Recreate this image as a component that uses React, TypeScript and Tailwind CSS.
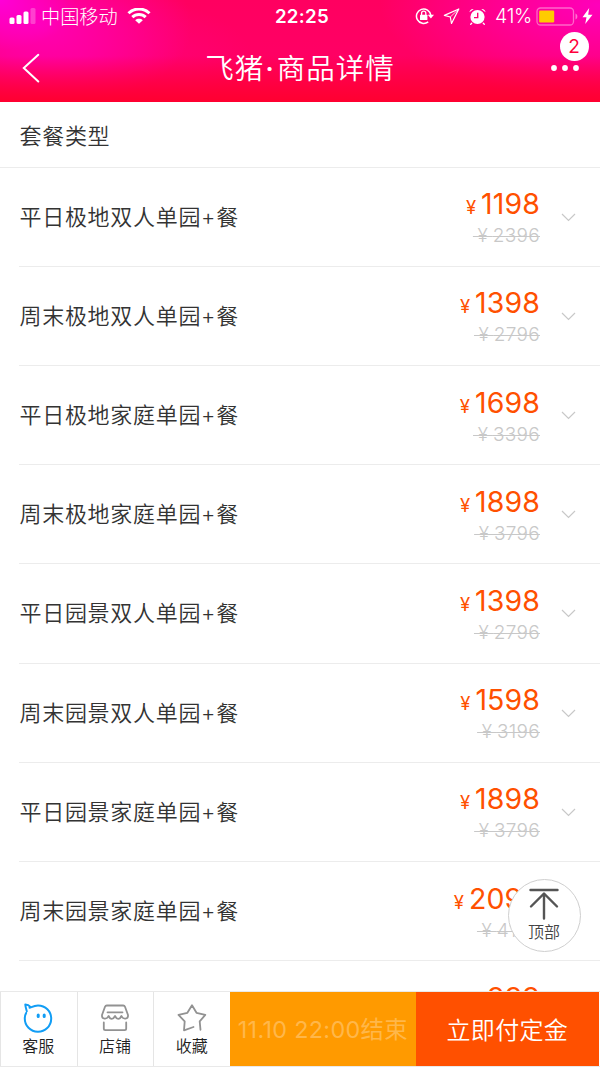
import type { ReactNode } from "react";

const packages = [
  { name: "平日极地双人单园+餐", price: "1198", oldPrice: "2396" },
  { name: "周末极地双人单园+餐", price: "1398", oldPrice: "2796" },
  { name: "平日极地家庭单园+餐", price: "1698", oldPrice: "3396" },
  { name: "周末极地家庭单园+餐", price: "1898", oldPrice: "3796" },
  { name: "平日园景双人单园+餐", price: "1398", oldPrice: "2796" },
  { name: "周末园景双人单园+餐", price: "1598", oldPrice: "3196" },
  { name: "平日园景家庭单园+餐", price: "1898", oldPrice: "3796" },
  { name: "周末园景家庭单园+餐", price: "2098", oldPrice: "4196" },
];

function StatusBar() {
  return (
    <div className="grid h-[34px] grid-cols-[1fr_auto_1fr] items-center">
      <div className="flex items-center pl-[9px]">
        <svg width="27" height="17" viewBox="0 0 27 17" fill="#fff">
          <rect x="0.5" y="9.5" width="5" height="6.5" rx="1.5" />
          <rect x="7.5" y="7" width="5" height="9" rx="1.5" />
          <rect x="14.5" y="3.5" width="5" height="12.5" rx="1.5" />
          <rect x="21.5" y="0" width="5" height="16" rx="1.5" opacity="0.25" />
        </svg>
        <span className="ml-[5px] pt-[2px] text-[19.2px] leading-none font-light whitespace-nowrap">中国移动</span>
        <svg className="ml-[9px]" width="24" height="17" viewBox="0 0 24 17" fill="none" stroke="#fff" strokeWidth="3">
          <path d="M1.5 5.3C7.3-.4 16.7-.4 22.5 5.3" />
          <path d="M5.3 9.2C9 5.6 15 5.6 18.7 9.2" />
          <path d="M12 15.7 8.2 12.2C10.4 10.3 13.6 10.3 15.8 12.2Z" fill="#fff" stroke="none" />
        </svg>
      </div>
      <span className="pt-px pl-[4px] text-[18.7px] font-semibold tracking-[0.3px]">22:25</span>
      <div className="flex items-center justify-end pr-[7px]">
        {/* Rotation lock */}
        <svg className="-mt-[2px]" width="19" height="18" viewBox="0 0 19 18" fill="none" stroke="#fff" strokeWidth="1.5">
          <path d="M13.2 14.8A7.2 7.2 0 1 1 15.8 8.2" />
          <path d="M12.8 7.7H19L15.9 11.5Z" fill="#fff" stroke="none" />
          <rect x="5" y="7.7" width="7.4" height="5.4" rx=".6" fill="#fff" stroke="none" />
          <path d="M6.6 8V6.2a2.1 2.1 0 0 1 4.2 0V8" strokeWidth="1.3" />
        </svg>
        <svg className="-mt-[2px] ml-[9px]" width="17" height="17" viewBox="0 0 17 17" fill="none" stroke="#fff" strokeWidth="1.2" strokeLinejoin="round">
          <path d="M15.8 1 1.4 7.4 7.3 9 8.5 15.5Z" />
          <path d="M7.3 9 15.8 1" strokeWidth="0.8" />
        </svg>
        {/* Alarm */}
        <svg className="-mt-[2px] ml-[9px]" width="17" height="17" viewBox="0 0 17 17" fill="#fff">
          <circle cx="8.5" cy="9" r="7.1" />
          <path d="M8.7 4.8v4.8H5" fill="none" stroke="#ff0070" strokeWidth="1.4" />
          <path d="M.5 4.3C.6 2.2 2.5.7 4.7 1.1ZM16.5 4.3C16.4 2.2 14.5.7 12.3 1.1Z" />
          <path d="m2.7 15.3-1 1M14.3 15.3l1 1" stroke="#fff" strokeWidth="1.3" strokeLinecap="round" />
        </svg>
        <span className="ml-[9px] text-[19.5px] leading-none font-[350] tracking-[-0.3px]">41%</span>
        <svg className="-mt-[2px] ml-[4px]" width="42" height="19" viewBox="0 0 42 19" fill="none">
          <rect x="1" y="1" width="36.5" height="17" rx="3.5" stroke="#fff" strokeOpacity=".4" strokeWidth="1.3" />
          <path d="M39.5 6.5C42 7.5 42 11.5 39.5 12.5Z" fill="#fff" fillOpacity=".45" />
          <rect x="3.2" y="3.5" width="15" height="12" rx="1.2" fill="#ffcb00" />
        </svg>
        <svg className="-mt-px ml-[4px]" width="11" height="17" viewBox="0 0 11 17" fill="#fff">
          <path d="M7.2 0 .5 9.2H4.5L3.2 16 10.5 6.8H6.2Z" />
        </svg>
      </div>
    </div>
  );
}

function Header() {
  return (
    <header className="h-[102px] shrink-0 bg-[linear-gradient(180deg,#ff003300_55%,#ff0030_100%),radial-gradient(ellipse_75px_50px_at_0px_0px,#ff00d8_0%,#ff00d800_100%),radial-gradient(ellipse_150px_85px_at_42px_26px,#ff00b4_0%,#ff00a000_100%),radial-gradient(ellipse_170px_65px_at_80px_55px,#ff009988_0%,#ff009900_100%),radial-gradient(ellipse_220px_95px_at_600px_5px,#ff00bb_0%,#ff009800_100%),linear-gradient(180deg,#ff0060_0%,#ff0064_50%,#ff0058_100%)] text-white">
      <StatusBar />
      <div className="relative flex h-[68px] items-center justify-between pr-[21px] pl-[22px]">
        <svg className="-mt-px" width="19" height="30" viewBox="0 0 19 30" fill="none" stroke="#fff" strokeWidth="2" strokeLinecap="round">
          <path d="M16.3 1.8 1.8 15 16.3 28.5" />
        </svg>
        <h1 className="absolute inset-x-0 top-[15px] text-center text-[28.5px] leading-[40px] font-[350] tracking-[1px]">
          飞猪<span className="mr-[2px] ml-[1px] font-medium">·</span>商品详情
        </h1>
        <svg width="28" height="6" viewBox="0 0 28 6" fill="#fff">
          <circle cx="3" cy="3" r="2.9" />
          <circle cx="14" cy="3" r="2.9" />
          <circle cx="25" cy="3" r="2.9" />
        </svg>
        <span className="absolute -top-[2px] right-[11.5px] flex size-[29px] items-center justify-center rounded-full bg-white pt-px text-[19px] text-[#ff003c]">
          2
        </span>
      </div>
    </header>
  );
}

function Price({ value }: { value: string }) {
  return (
    <div className="flex items-baseline text-[#ff5000]">
      <span className="mr-[5px] text-[18.5px] leading-none font-[370]">¥</span>
      <span className="-mr-[0.5px] text-[28.5px] leading-[36px] font-[370] tracking-[0.1px]">{value}</span>
    </div>
  );
}

function PackageRow({ name, price, oldPrice }: { name: string; price: string; oldPrice: string }) {
  return (
    <li className="ml-[19px] flex h-[99.22px] shrink-0 items-center border-b border-[#ececec] pr-[24px]">
      <span className="flex-1 pt-px pl-[0.5px] text-[22px] font-[350] tracking-[0.7px] text-[#333]">{name}</span>
      <div className="flex flex-col items-end pt-[2px] text-right">
        <Price value={price} />
        <span className="mt-px -mr-[0.5px] text-[19px] leading-[26px] font-[350] tracking-[0.3px] text-[#c8c8c8] line-through decoration-1 [word-spacing:-1px]">
          &nbsp;¥ {oldPrice}
        </span>
      </div>
      <svg className="mt-px ml-[21.5px]" width="15" height="9" viewBox="0 0 15 9" fill="none" stroke="#c8c8c8" strokeWidth="1.2">
        <path d="m1 1 6.5 6.4L14 1" />
      </svg>
    </li>
  );
}

function TabItem({ label, children }: { label: string; children: ReactNode }) {
  return (
    <button className="flex w-[76.7px] flex-col items-center border-l border-[#e5e5e5] pt-[11px] pr-px">
      {children}
      <span className="mt-px text-[16px] leading-[24px] font-[350] text-[#222]">{label}</span>
    </button>
  );
}

function BottomBar() {
  return (
    <nav className="flex h-[76px] shrink-0 border-y border-[#e9e9e9] bg-white pr-px">
      <TabItem label="客服">
        <svg width="30" height="30" viewBox="0 0 30 30" fill="none" stroke="#119df5" strokeWidth="2" strokeLinecap="round" strokeLinejoin="round">
          <path d="M3.8 8.2C3 5.7 2.4 3.7 2.3 1.5 4.5 1.5 6.3 2.5 7.3 3.8L6.6 4.7C8 4.7 10.2 2.4 15 2.4A13.2 13.2 0 1 1 1.8 15.3C1.8 13.4 2.2 11.7 3.1 10" />
          <path d="M15.2 12v1.6M21.2 12v1.6" strokeWidth="3" />
        </svg>
      </TabItem>
      <TabItem label="店铺">
        <svg width="30" height="30" viewBox="0 0 30 30" fill="none" stroke="#929292" strokeWidth="1.8" strokeLinecap="round" strokeLinejoin="round">
          <path d="M6.8 2.5h16.4c1 0 1.5.5 1.8 1.3L28 12v1c0 3-4.6 3.6-6.2.6l-.4-.6c-1.7 3.7-4.6 3.7-6.4 0-1.8 3.7-4.7 3.7-6.4 0l-.4.6C6.6 16.6 2 16 2 13v-1L5 3.8c.3-.8.8-1.3 1.8-1.3Z" />
          <path d="M7.5 9.3h15M3.8 19.5v6c0 1 .6 1.6 1.6 1.6h19.2c1 0 1.6-.6 1.6-1.6v-6" />
        </svg>
      </TabItem>
      <TabItem label="收藏">
        <svg width="30" height="30" viewBox="0 0 30 30" fill="none" stroke="#929292" strokeWidth="1.8" strokeLinecap="round" strokeLinejoin="round">
          <path d="M16.5 24 7 27.3 7.7 18.4 1.5 11.9 10.4 9.8 15 2.2 19.5 9.8 28.3 11.9 22.7 18.4 23.5 26.8" />
        </svg>
      </TabItem>
      <div className="flex w-[185.5px] items-center justify-center bg-[#ff9a00] pt-[2px] text-[23.3px] tracking-[0.35px] whitespace-nowrap text-[#ffb74a]">
        11.10 22:00结束
      </div>
      <button className="flex-1 bg-[#ff5000] pt-[3px] text-[24px] font-[350] tracking-[0.3px] text-white">立即付定金</button>
    </nav>
  );
}

export default function App() {
  return (
    <div className="relative flex h-[1067px] w-[600px] flex-col overflow-hidden bg-white font-[Inter,'Noto_Sans_CJK_SC',sans-serif]">
      <Header />
      <main className="flex min-h-0 flex-1 flex-col overflow-hidden">
        <h2 className="flex h-[65.5px] shrink-0 items-center border-b border-[#ececec] pt-[4px] pl-[19.5px] text-[22px] font-[350] tracking-[0.7px] text-[#333]">
          套餐类型
        </h2>
        <ul className="flex flex-col">
          {packages.map((item, index) => (
            <PackageRow key={index} {...item} />
          ))}
          {/* Next package, still mostly under the bottom bar */}
          <li className="flex justify-end pt-[19px] pr-[60px] text-[28.5px] leading-[36px] font-[370] text-[#ff5000]">
            999
          </li>
        </ul>
      </main>
      <BottomBar />

      {/* Back to top */}
      <button className="absolute top-[879px] left-[507.5px] flex size-[73px] flex-col items-center rounded-full border border-[#cfcfcf] bg-white pt-[7px]">
        <svg width="30" height="33" viewBox="0 0 30 33" fill="none" stroke="#555" strokeWidth="2.4" strokeLinecap="round" strokeLinejoin="round">
          <path d="M1.5 3h27M15 7v24.5M2 19.5 15 6.5 28 19.5" />
        </svg>
        <span className="mt-px text-[16px] leading-[22px] font-[350] text-[#444]">顶部</span>
      </button>
    </div>
  );
}
